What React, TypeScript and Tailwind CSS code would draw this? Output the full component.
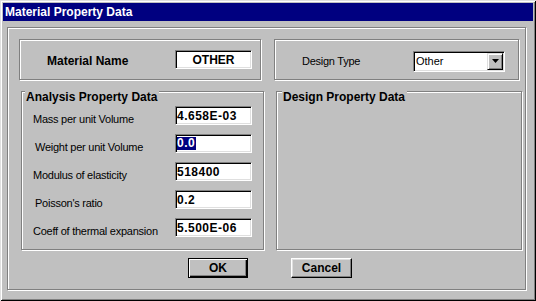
import React from "react";

const etched =
  "border border-[#808080] shadow-[inset_1px_1px_0_#fff,1px_1px_0_#fff]";
const sunken =
  "bg-white border border-t-[#808080] border-l-[#808080] border-r-white border-b-white shadow-[inset_1px_1px_0_#000,inset_-1px_-1px_0_#dfdfdf]";

function Field({ value, selected }: { value: string; selected?: boolean }) {
  return (
    <div
      className={`ml-auto mr-[11px] w-[77px] h-[19px] ${sunken} flex items-center pl-[1px] text-[12px] font-bold tracking-[0.5px] text-black`}
    >
      {selected ? (
        <span className="bg-[#000080] text-white leading-[13px] pr-[1px]">{value}</span>
      ) : (
        <span className="leading-[14px]">{value}</span>
      )}
    </div>
  );
}

function Row({ label, value, indent, selected }: { label: string; value: string; indent?: boolean; selected?: boolean }) {
  return (
    <div className="flex items-center h-[19px]">
      <span
        className={`${indent ? "pl-[13px]" : "pl-[11px]"} mt-[8px] text-[11px] tracking-[-0.25px] leading-[13px] text-black`}
      >
        {label}
      </span>
      <Field value={value} selected={selected} />
    </div>
  );
}

export default function App() {
  return (
    <div className="w-[536px] h-[301px] bg-[#c0c0c0] p-[3px] flex flex-col shadow-[inset_1px_1px_0_#dfdfdf,inset_-1px_-1px_0_#000,inset_2px_2px_0_#fff,inset_-2px_-2px_0_#808080] font-['Liberation_Sans',Arial,sans-serif]">
      <div className="h-[18px] bg-[#000080] text-white font-bold text-[12px] leading-[18px] pl-[2px]">
        Material Property Data
      </div>
      <div className={`mt-[6px] ml-[4px] w-[519px] h-[263px] ${etched} flex flex-col`}>
        {/* Row 1 */}
        <div className="flex pt-[11px] pl-[11px]">
          <div className={`w-[242px] h-[41px] ${etched} flex items-center pl-[27px]`}>
            <span className="mt-[3px] text-[12px] font-bold leading-[14px] text-black">Material Name</span>
            <div
              className={`ml-auto mr-[8px] w-[77px] h-[19px] ${sunken} flex items-center justify-center text-[12px] font-bold leading-[14px] text-black`}
            >
              OTHER
            </div>
          </div>
          <div className={`ml-[13px] w-[245px] h-[41px] ${etched} flex items-center pl-[27px]`}>
            <span className="mt-[3px] text-[11px] tracking-[-0.25px] leading-[13px] text-black">Design Type</span>
            <div
              className={`ml-auto mr-[13px] mt-[3px] w-[92px] h-[21px] ${sunken} flex items-center p-[1px]`}
            >
              <span className="flex-1 pl-[1px] text-[11px] leading-[13px] text-black">Other</span>
              <div className="w-[16px] h-[17px] bg-[#c0c0c0] border border-t-[#dfdfdf] border-l-[#dfdfdf] border-r-black border-b-black shadow-[inset_1px_1px_0_#fff,inset_-1px_-1px_0_#808080] flex items-center justify-center">
                <svg width="7" height="4" viewBox="0 0 7 4">
                  <polygon points="0,0 7,0 3.5,4" fill="#000" />
                </svg>
              </div>
            </div>
          </div>
        </div>

        {/* Row 2 */}
        <div className="flex mt-[11px] pl-[13px]">
          <div className={`relative w-[243px] h-[159px] ${etched}`}>
            <span className="absolute top-[-2px] left-[3px] bg-[#c0c0c0] pl-[1px] pr-[2px] text-[12px] font-bold leading-[14px] text-black">
              Analysis Property Data
            </span>
            <div className="flex flex-col pt-[14px] gap-[9px]">
              <Row label="Mass per unit Volume" value="4.658E-03" />
              <Row label="Weight per unit Volume" value="0.0" indent selected />
              <Row label="Modulus of elasticity" value="518400" />
              <Row label="Poisson's ratio" value="0.2" indent />
              <Row label="Coeff of thermal expansion" value="5.500E-06" />
            </div>
          </div>
          <div className={`relative ml-[12px] w-[246px] h-[159px] ${etched}`}>
            <span className="absolute top-[-2px] left-[5px] bg-[#c0c0c0] pl-[1px] pr-[2px] text-[12px] font-bold leading-[14px] text-black">
              Design Property Data
            </span>
          </div>
        </div>

        {/* Buttons */}
        <div className="flex mt-[8px] pl-[180px]">
          <button className="w-[60px] h-[20px] bg-[#c0c0c0] border border-black shadow-[inset_1px_1px_0_#fff,inset_-1px_-1px_0_#000,inset_-2px_-2px_0_#808080] flex items-center justify-center text-[12px] font-bold leading-[14px] text-black">
            OK
          </button>
          <button className="ml-[43px] w-[61px] h-[20px] bg-[#c0c0c0] border border-t-white border-l-white border-r-black border-b-black shadow-[inset_-1px_-1px_0_#808080,inset_1px_1px_0_#dfdfdf] flex items-center justify-center text-[12px] font-bold leading-[14px] text-black">
            Cancel
          </button>
        </div>
      </div>
    </div>
  );
}
